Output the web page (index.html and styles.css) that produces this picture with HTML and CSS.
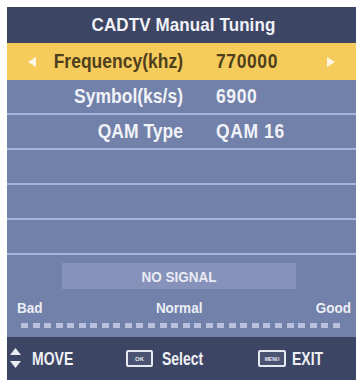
FILE: index.html
```html
<!DOCTYPE html>
<html>
<head>
<meta charset="utf-8">
<link rel="stylesheet" href="styles.css">
</head>
<body>
<div class="screen">
  <div class="title"><span class="tall">CADTV Manual Tuning</span></div>
  <div class="row active">
    <span class="arrow left"></span>
    <span class="label"><span class="tall">Frequency(khz)</span></span>
    <span class="value"><span class="tall">770000</span></span>
    <span class="arrow right"></span>
  </div>
  <div class="row">
    <span></span>
    <span class="label"><span class="tall">Symbol(ks/s)</span></span>
    <span class="value"><span class="tall">6900</span></span>
    <span></span>
  </div>
  <div class="row">
    <span></span>
    <span class="label"><span class="tall">QAM Type</span></span>
    <span class="value"><span class="tall">QAM 16</span></span>
    <span></span>
  </div>
  <div class="row"></div>
  <div class="row"></div>
  <div class="row"></div>
  <div class="signal">
    <div class="nosig"><span class="tall">NO SIGNAL</span></div>
    <div class="levels"><span class="tall">Bad</span><span class="tall">Normal</span><span class="tall">Good</span></div>
    <div class="dots">
      <i></i><i></i><i></i><i></i><i></i><i></i><i></i>
      <i></i><i></i><i></i><i></i><i></i><i></i><i></i>
      <i></i><i></i><i></i><i></i><i></i><i></i><i></i>
      <i></i><i></i><i></i><i></i><i></i><i></i><i></i>
    </div>
  </div>
  <div class="footer">
    <div class="group g-move">
      <svg class="updown" width="11" height="21" viewBox="0 0 11 21"><polygon points="5.5,0 11,7 0,7" fill="#e9ebf3"/><polygon points="0,13 11,13 5.5,20" fill="#e9ebf3"/></svg>
      <span class="ftxt">MOVE</span>
    </div>
    <div class="group g-ok">
      <span class="key ok">OK</span>
      <span class="ftxt">Select</span>
    </div>
    <div class="group g-exit">
      <span class="key menu">MENU</span>
      <span class="ftxt">EXIT</span>
    </div>
  </div>
</div>
</body>
</html>
```
FILE: styles.css
```css
html, body {
  margin: 0;
  padding: 0;
  background: #ffffff;
}
body {
  font-family: "Liberation Sans", Arial, sans-serif;
  font-weight: bold;
}
.tall {
  display: inline-block;
  transform: scaleY(1.12);
}
.screen {
  margin: 7px 0 0 7px;
  width: 349px;
  background: #7181a9;
  color: #f1f2f7;
}
.title {
  height: 36px;
  background: #3d4564;
  display: flex;
  align-items: center;
  justify-content: center;
  padding-left: 4px;
  font-size: 17px;
  letter-spacing: 0.1px;
}
.row {
  height: 33px;
  border-bottom: 2px solid #a8b4d6;
  display: grid;
  grid-template-columns: 8px 147px 1fr 8px;
  align-items: center;
  padding: 0 21px;
  font-size: 17.5px;
}
.row.active {
  height: 37px;
  border-bottom: none;
  background: #f5cc5c;
  color: #4f3f1d;
}
.label {
  text-align: right;
  white-space: nowrap;
}
.value {
  padding-left: 33px;
  letter-spacing: 0.6px;
}
.arrow {
  width: 0;
  height: 0;
  border-top: 5px solid transparent;
  border-bottom: 5px solid transparent;
}
.arrow.left {
  border-right: 8px solid #fdf6e4;
}
.arrow.right {
  border-left: 8px solid #fdf6e4;
}
.signal {
  padding-top: 8px;
  padding-bottom: 9px;
}
.nosig {
  margin-left: 55px;
  width: 234px;
  height: 26px;
  background: #8792ba;
  display: flex;
  align-items: center;
  justify-content: center;
  font-size: 13.5px;
  color: #e9ebf4;
}
.levels {
  margin-top: 10px;
  height: 16px;
  display: flex;
  justify-content: space-between;
  align-items: center;
  padding: 0 5px 0 10px;
  font-size: 13.5px;
  color: #eceef6;
}
.dots {
  margin-top: 8px;
  height: 5px;
  display: flex;
  justify-content: space-between;
  padding: 0 16px 0 14px;
}
.dots i {
  width: 7px;
  height: 5px;
  background: #b9c1de;
}
.footer {
  height: 43px;
  background: #3d4564;
  display: grid;
  grid-template-columns: 116px 132px 1fr;
  align-items: center;
  padding-left: 3px;
}
.group {
  display: flex;
  align-items: center;
}
.g-move { gap: 11px; }
.g-ok { gap: 9px; }
.g-exit { gap: 6px; }
.updown {
  display: block;
}
.ftxt {
  display: inline-block;
  font-size: 14px;
  transform: scaleY(1.25);
  color: #eef0f6;
}
.key {
  box-sizing: border-box;
  height: 17px;
  border: 2px solid #e6e9f2;
  border-radius: 2px;
  background: #4a5372;
  display: flex;
  align-items: center;
  justify-content: center;
  color: #e6e9f2;
  font-size: 6px;
}
.key.ok { width: 27px; }
.key.menu { width: 28px; font-size: 5px; }
```
